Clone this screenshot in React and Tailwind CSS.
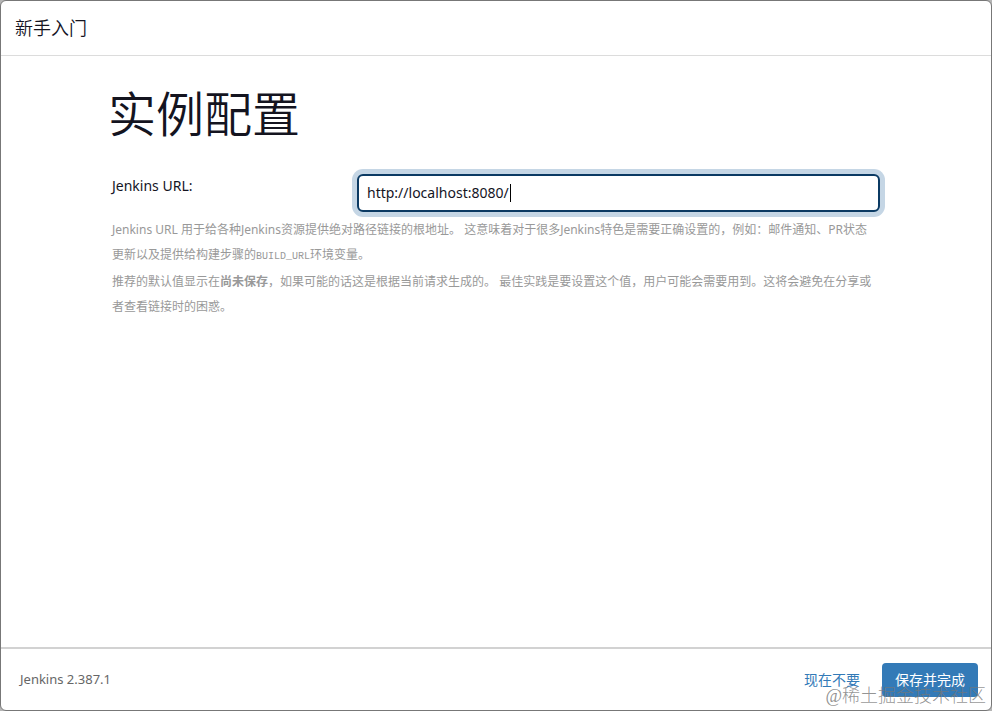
import { useState } from 'react';

function Header() {
  return (
    <header className="flex h-[55px] items-center border-b border-[#dcdcdc] px-3.5">
      <h2 className="text-lg font-[350]">新手入门</h2>
    </header>
  );
}

function HelpText() {
  return (
    <div className="mt-[5px] pr-2 text-xs leading-[25px] text-[#999]">
      <p>
        Jenkins URL 用于给各种Jenkins资源提供绝对路径链接的根地址。 这意味着对于很多Jenkins特色是需要正确设置的，例如：邮件通知、PR状态更新以及提供给构建步骤的
        <code className="font-['Liberation_Mono',monospace] text-[10px]">BUILD_URL</code>
        环境变量。
      </p>
      <p>
        推荐的默认值显示在<strong className="font-bold">尚未保存</strong>，如果可能的话这是根据当前请求生成的。 最佳实践是要设置这个值，用户可能会需要用到。这将会避免在分享或者查看链接时的困惑。
      </p>
    </div>
  );
}

function Footer() {
  return (
    <footer className="relative flex h-[63px] items-center justify-between border-t-2 border-[#d2d2d2] pr-[13px] pl-[19px] text-sm">
      <span className="text-[13px] text-[#666]">Jenkins 2.387.1</span>
      <div className="flex items-center gap-2.5">
        <button type="button" className="h-[34px] px-3 text-[#337ab7]">现在不要</button>
        <button type="submit" form="instance" className="h-[34px] rounded bg-[#337ab7] px-[13px] text-white">
          保存并完成
        </button>
      </div>
      <span className="pointer-events-none absolute right-[5px] bottom-0 font-['Liberation_Serif','Noto_Sans_CJK_SC',serif] text-lg leading-7 font-light text-[#777]/80">
        @稀土掘金技术社区
      </span>
    </footer>
  );
}

export default function App() {
  const [url, setUrl] = useState('http://localhost:8080/');
  return (
    <div className="min-h-screen bg-[#b5b5b5] font-['Noto_Sans','Noto_Sans_CJK_SC',sans-serif] text-[#14141f]">
      <div lang="zh-CN" className="flex min-h-screen flex-col rounded-md border border-[#777] bg-white">
        <Header />
        <main className="flex-1 px-[111px] pt-[26px]">
          <h1 className="-ml-1 text-5xl leading-[64px] font-[350]">实例配置</h1>
          <form id="instance" onSubmit={(e) => e.preventDefault()}>
            <div className="mt-7 flex items-start">
              <label htmlFor="root-url" className="w-[245px] shrink-0 text-sm leading-6">Jenkins URL:</label>
              <div className="relative flex min-w-0 flex-1">
                <input
                  id="root-url"
                  type="text"
                  value={url}
                  onChange={(e) => setUrl(e.target.value)}
                  className="h-[38px] min-w-0 flex-1 rounded-md border-2 border-[#0b3a63] bg-white px-2 pb-0.5 text-sm ring-[5px] ring-[#c5d6e5] outline-none"
                />
                <span aria-hidden="true" className="absolute top-[10px] left-[153px] h-[18px] w-px bg-black" />
              </div>
            </div>
            <HelpText />
          </form>
        </main>
        <Footer />
      </div>
    </div>
  );
}
